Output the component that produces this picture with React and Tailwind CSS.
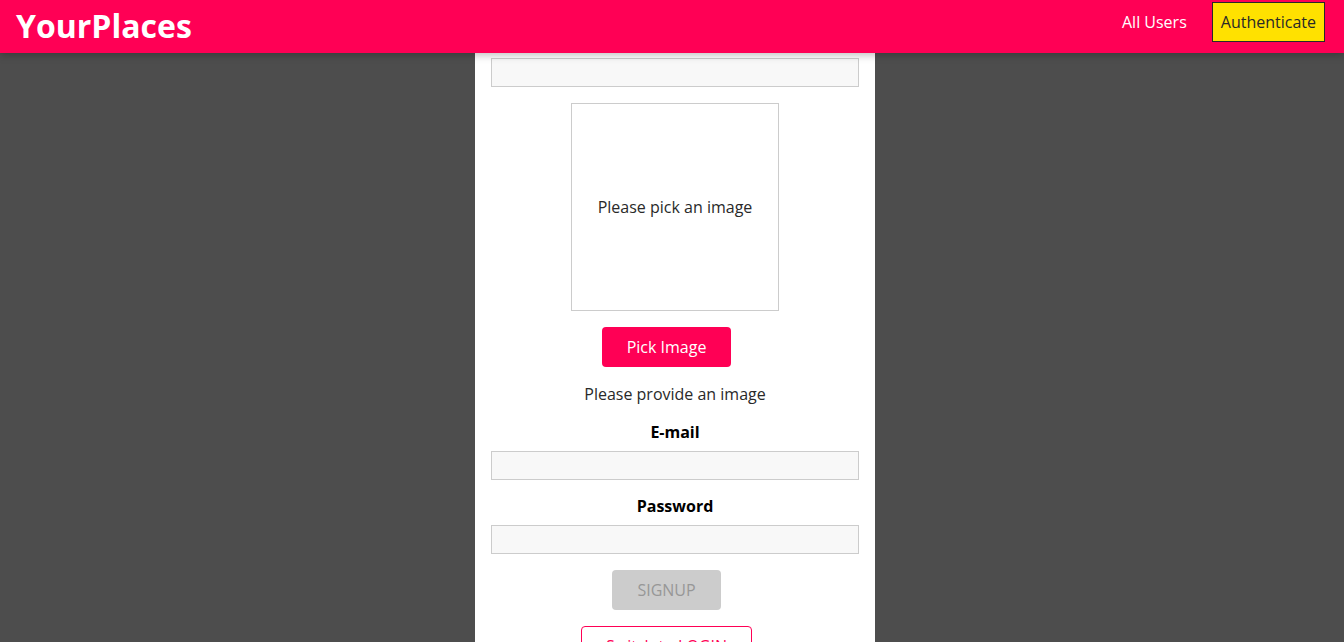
import React from "react";

export default function App() {
  return (
    <div
      className="h-[642px] overflow-hidden bg-[#4d4d4d] flex flex-col"
      style={{ fontFamily: "'Open Sans', sans-serif" }}
    >
      <header className="relative z-10 h-[53px] shrink-0 bg-[#ff0055] flex items-center justify-between pl-4 pr-[19px] shadow-[0_2px_8px_rgba(0,0,0,0.26)]">
        <h1 className="text-[32px] font-bold text-white leading-none -mt-[2px]">YourPlaces</h1>
        <nav className="flex items-center gap-[25px] -mt-[14px]">
          <a className="text-white text-[16px] mt-[4px]">All Users</a>
          <button className="bg-[#ffe100] border border-[#292929] text-[#292929] text-[16px] h-[40px] px-2 mt-[4px]">
            Authenticate
          </button>
        </nav>
      </header>
      <div className="flex justify-center pl-[6px] flex-1">
        <div className="w-[400px] bg-white px-4 pt-[5px] flex flex-col items-center">
          <input className="w-full h-[29px] bg-[#f8f8f8] border border-[#cccccc] outline-none" />
          <div className="mt-[16px] w-[208px] h-[208px] border border-[#cccccc] flex items-center justify-center text-[16px] text-[#292929]">
            Please pick an image
          </div>
          <button className="mt-[16px] h-[40px] w-[129px] rounded bg-[#ff0055] text-white text-[16px] -ml-[17px]">
            Pick Image
          </button>
          <p className="mt-[15px] text-[16px] text-[#292929] leading-6">Please provide an image</p>
          <label className="mt-[14px] text-[16px] font-bold text-black leading-6">E-mail</label>
          <input className="mt-[7px] w-full h-[29px] bg-[#f8f8f8] border border-[#cccccc] outline-none" />
          <label className="mt-[14px] text-[16px] font-bold text-black leading-6">Password</label>
          <input className="mt-[7px] w-full h-[29px] bg-[#f8f8f8] border border-[#cccccc] outline-none" />
          <button className="mt-[16px] h-[40px] w-[109px] rounded bg-[#cccccc] text-[#979797] text-[16px] -ml-[17px]">
            SIGNUP
          </button>
          <button className="mt-[16px] h-[40px] w-[171px] rounded border border-[#ff0055] text-[#ff0055] text-[16px] -ml-[17px]">
            Switch to LOGIN
          </button>
        </div>
      </div>
    </div>
  );
}
